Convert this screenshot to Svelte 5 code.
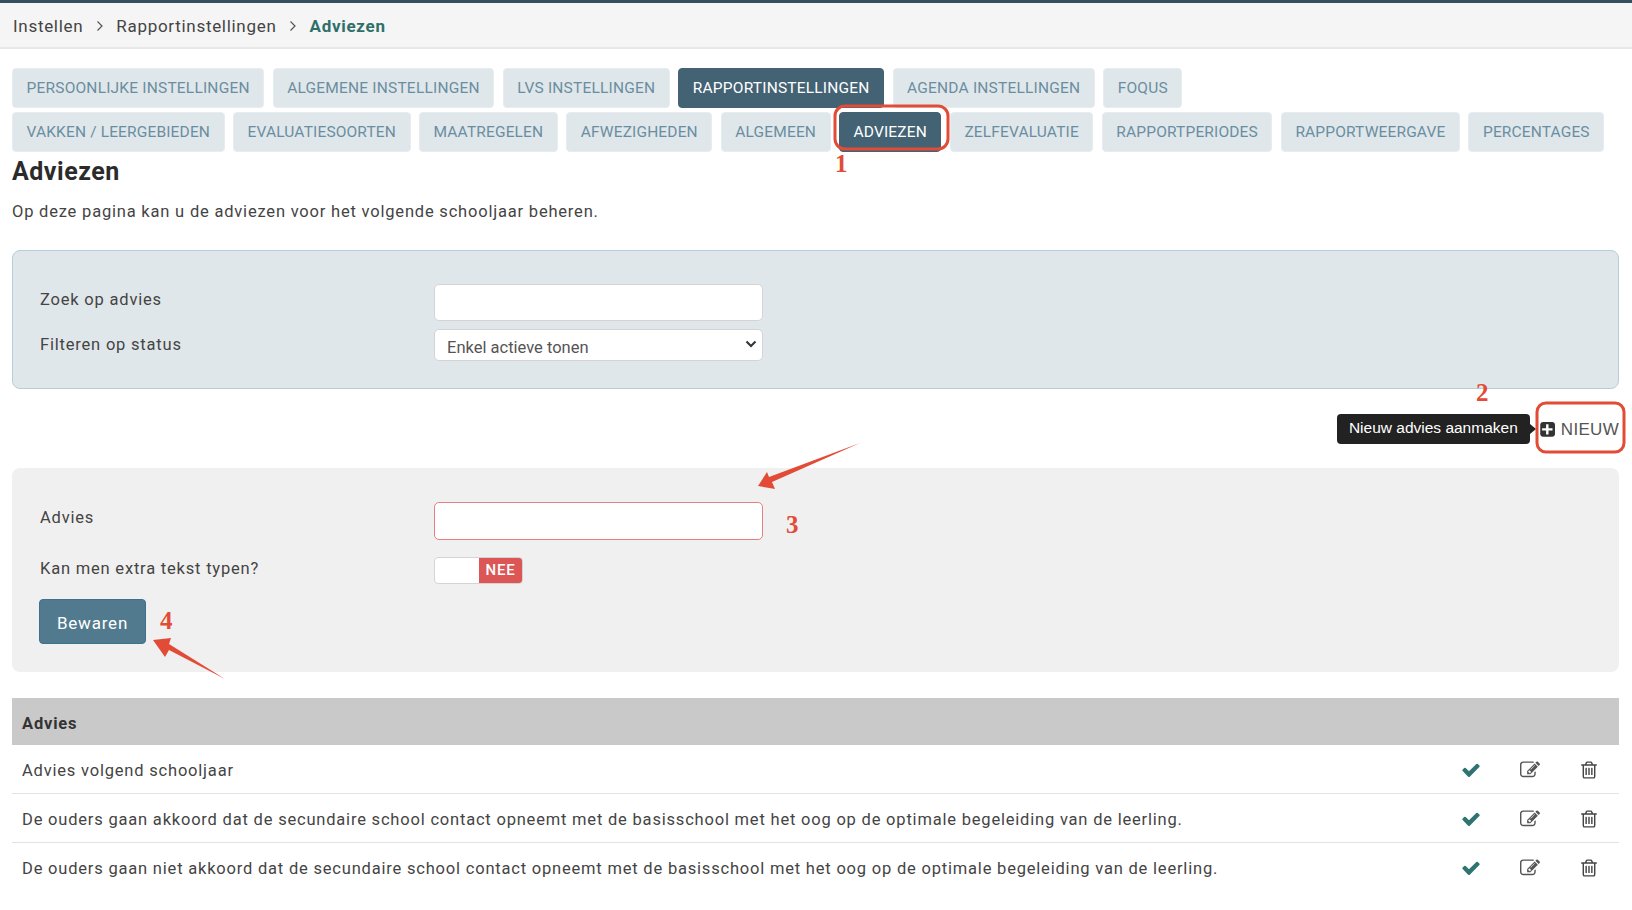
<script>
  const tabsTop = ["Persoonlijke instellingen", "Algemene instellingen", "LVS instellingen", "Rapportinstellingen", "Agenda instellingen", "Foqus"];
  const tabsSub = ["Vakken / leergebieden", "Evaluatiesoorten", "Maatregelen", "Afwezigheden", "Algemeen", "Adviezen", "Zelfevaluatie", "Rapportperiodes", "Rapportweergave", "Percentages"];
  const rows = [
    "Advies volgend schooljaar",
    "De ouders gaan akkoord dat de secundaire school contact opneemt met de basisschool met het oog op de optimale begeleiding van de leerling.",
    "De ouders gaan niet akkoord dat de secundaire school contact opneemt met de basisschool met het oog op de optimale begeleiding van de leerling."
  ];
</script>

<div class="page">
  <nav class="crumbs">
    <span>Instellen</span>
    <svg class="sep" viewBox="0 0 8 12"><path d="M1.5 1.5 6 6l-4.500 4.500" /></svg>
    <span>Rapportinstellingen</span>
    <svg class="sep" viewBox="0 0 8 12"><path d="M1.5 1.5 6 6l-4.500 4.500" /></svg>
    <strong>Adviezen</strong>
  </nav>

  <main>
    <div class="tabs">
      {#each tabsTop as tab}
        <button class="tab" class:active={tab === "Rapportinstellingen"}>{tab}</button>
      {/each}
    </div>
    <div class="tabs sub">
      {#each tabsSub as tab}
        <button class="tab" class:active={tab === "Adviezen"}>{tab}</button>
      {/each}
    </div>

    <h1>Adviezen</h1>
    <p class="intro">Op deze pagina kan u de adviezen voor het volgende schooljaar beheren.</p>

    <section class="filter">
      <label class="field">
        <span>Zoek op advies</span>
        <input type="text" />
      </label>
      <label class="field select-field">
        <span>Filteren op status</span>
        <div class="select-wrap">
          <select>
            <option>Enkel actieve tonen</option>
          </select>
          <svg viewBox="0 0 12 8"><path d="M1.500 1.500 6 6l4.500-4.500" /></svg>
        </div>
      </label>
    </section>

    <div class="actions">
      <div class="tooltip">Nieuw advies aanmaken</div>
      <button class="new">
        <svg viewBox="0 0 1664 1664"><path transform="translate(0 -128)" d="M1408 960v-128q0-26-19-45t-45-19h-352v-352q0-26-19-45t-45-19h-128q-26 0-45 19t-19 45v352h-352q-26 0-45 19t-19 45v128q0 26 19 45t45 19h352v352q0 26 19 45t45 19h128q26 0 45-19t19-45v-352h352q26 0 45-19t19-45zm256-544v960q0 119-84.500 203.500t-203.500 84.500h-960q-119 0-203.500-84.500t-84.500-203.500v-960q0-119 84.500-203.500t203.500-84.500h960q119 0 203.500 84.500t84.500 203.500z" /></svg>
        NIEUW
      </button>
    </div>

    <section class="form">
      <label class="field advies">
        <span>Advies</span>
        <input class="invalid" type="text" />
      </label>
      <div class="field toggle-row">
        <span>Kan men extra tekst typen?</span>
        <div class="toggle"><i></i><b>NEE</b></div>
      </div>
      <button class="save">Bewaren</button>
    </section>

    <table>
      <colgroup>
        <col />
        <col class="c1" />
        <col class="c2" />
        <col class="c3" />
      </colgroup>
      <thead>
        <tr><th colspan="4">Advies</th></tr>
      </thead>
      <tbody>
        {#each rows as row}
          <tr>
            <td>{row}</td>
            <td class="icon">
              <svg class="check" viewBox="0 0 1792 1792"><path d="M1671 566q0 40-28 68l-724 724-136 136q-28 28-68 28t-68-28l-136-136-362-362q-28-28-28-68t28-68l136-136q28-28 68-28t68 28l294 295 656-657q28-28 68-28t68 28l136 136q28 28 28 68z" /></svg>
            </td>
            <td class="icon">
              <svg class="edit" viewBox="0 0 1792 1792"><path d="M888 1184l116-116-152-152-116 116v56h96v96h56zm440-720q-16-16-33 1l-350 350q-17 17-1 33t33-1l350-350q17-17 1-33zm80 594v190q0 119-84.500 203.500t-203.500 84.500h-832q-119 0-203.500-84.500t-84.500-203.500v-832q0-119 84.500-203.500t203.500-84.500h832q63 0 117 25 15 7 18 23 3 17-9 29l-49 49q-14 14-32 8-23-6-45-6h-832q-66 0-113 47t-47 113v832q0 66 47 113t113 47h832q66 0 113-47t47-113v-126q0-13 9-22l64-64q15-15 35-7t20 29zm-96-738l288 288-672 672h-288v-288zm444 132l-92 92-288-288 92-92q28-28 68-28t68 28l152 152q28 28 28 68t-28 68z" /></svg>
            </td>
            <td class="icon">
              <svg class="trash" viewBox="0 0 1792 1792"><path d="M704 736v576q0 14-9 23t-23 9h-64q-14 0-23-9t-9-23v-576q0-14 9-23t23-9h64q14 0 23 9t9 23zm256 0v576q0 14-9 23t-23 9h-64q-14 0-23-9t-9-23v-576q0-14 9-23t23-9h64q14 0 23 9t9 23zm256 0v576q0 14-9 23t-23 9h-64q-14 0-23-9t-9-23v-576q0-14 9-23t23-9h64q14 0 23 9t9 23zm128 724v-948h-896v948q0 22 7 40.500t14.500 27 10.500 8.500h832q3 0 10.500-8.500t14.500-27 7-40.500zm-672-1076h448l-48-117q-7-9-17-11h-317q-10 2-17 11zm928 32v64q0 14-9 23t-23 9h-96v948q0 83-47 143.500t-113 60.500h-832q-66 0-113-58.500t-47-141.500v-952h-96q-14 0-23-9t-9-23v-64q0-14 9-23t23-9h309l70-167q15-37 54-63t79-26h320q40 0 79 26t54 63l70 167h309q14 0 23 9t9 23z" /></svg>
            </td>
          </tr>
        {/each}
      </tbody>
    </table>
  </main>

  <!-- annotations drawn on top of the screenshot -->
  <svg class="marks" viewBox="0 0 1632 910">
    <rect x="835" y="106" width="113" height="43" rx="10" />
    <rect x="1537" y="403" width="87" height="49" rx="9" />
    <polygon points="860,443 772,482 775,489 758,486 767,472 769,477" />
    <polygon points="225,679 169,650 165,657 153,640 171,638 169,644" />
    <text x="835" y="172">1</text>
    <text x="1476" y="401">2</text>
    <text x="786" y="533">3</text>
    <text x="160" y="629">4</text>
  </svg>
</div>

<style>
  :global(body) {
    margin: 0;
    background: #fff;
  }

  .page {
    position: relative;
    width: 1632px;
    height: 910px;
    overflow: hidden;
    font-family: Roboto, "Liberation Sans", sans-serif;
    font-size: 16.500px;
    letter-spacing: 0.8px;
    color: #444;
  }

  .crumbs {
    display: flex;
    align-items: center;
    gap: 12.500px;
    height: 43px;
    padding: 1px 13px 0;
    background: #f5f5f5;
    border-top: 3px solid #34505f;
    border-bottom: 2px solid #e8e8e8;
    font-size: 17px;
    letter-spacing: 0.7px;
  }

  .crumbs strong {
    color: #2f6f6a;
  }

  .sep {
    width: 8px;
    height: 12px;
    fill: none;
    stroke: #555;
    stroke-width: 1.2;
  }

  main {
    padding: 19px 13px 0 12px;
  }

  .tabs {
    display: flex;
    gap: 8.500px;
  }

  .sub {
    margin-top: 4px;
  }

  .tab {
    height: 40px;
    padding: 0 13.500px;
    border: 1px solid #e6ecef;
    border-radius: 4px;
    background: #e0e7ea;
    color: #6a8ea1;
    font: inherit;
    font-size: 15.500px;
    letter-spacing: 0.2px;
    text-transform: uppercase;
    white-space: nowrap;
  }

  .sub .tab {
    letter-spacing: 0.15px;
  }

  .tab.active {
    background: #436274;
    border-color: #436274;
    color: #fff;
  }

  h1 {
    margin: 4px 0 0;
    font-size: 25px;
    line-height: 32px;
    color: #2b2b2b;
    letter-spacing: 0.5px;
  }

  .intro {
    margin: 12px 0 0;
    line-height: 24px;
  }

  .filter {
    box-sizing: border-box;
    height: 139px;
    margin-top: 26px;
    padding: 33px 27px 0;
    background: #e0e7ea;
    border: 1px solid #b6cddb;
    border-radius: 8px;
  }

  .field {
    display: grid;
    grid-template-columns: 394px 329px;
  }

  .field span {
    padding-top: 1px;
    line-height: 30px;
  }

  input {
    box-sizing: border-box;
    width: 100%;
    height: 37px;
    padding: 0 12px;
    background: #fff;
    border: 1px solid #d4d4d4;
    border-radius: 5px;
    outline: none;
  }

  .select-field {
    margin-top: 8px;
  }

  .select-wrap {
    position: relative;
    height: 32px;
  }

  select {
    box-sizing: border-box;
    width: 100%;
    height: 32px;
    padding: 4px 12px 0;
    appearance: none;
    background: #fff;
    border: 1px solid #d4d4d4;
    border-radius: 5px;
    color: #555;
    font: inherit;
  }

  .select-wrap svg {
    position: absolute;
    top: 11px;
    right: 6px;
    width: 12px;
    height: 8px;
    fill: none;
    stroke: #333;
    stroke-width: 2;
  }

  .actions {
    display: flex;
    justify-content: flex-end;
    align-items: center;
    height: 79px;
  }

  .tooltip {
    position: relative;
    box-sizing: border-box;
    width: 193px;
    height: 30px;
    margin: 1px 9px 0 0;
    background: #222;
    border-radius: 4px;
    color: #fff;
    font-family: "Liberation Sans", Arial, sans-serif;
    font-size: 15.500px;
    letter-spacing: 0;
    line-height: 28px;
    text-align: center;
  }

  .tooltip::after {
    content: "";
    position: absolute;
    top: 10px;
    right: -6px;
    border-style: solid;
    border-width: 5px 0 5px 6px;
    border-color: transparent transparent transparent #222;
  }

  .new {
    display: flex;
    align-items: center;
    gap: 6px;
    padding: 0;
    margin-top: 3px;
    background: none;
    border: none;
    color: #555;
    font-family: "Liberation Sans", Arial, sans-serif;
    font-size: 17px;
    letter-spacing: 0.3px;
  }

  .new svg {
    width: 16px;
    height: 16px;
    fill: #333;
  }

  .form {
    box-sizing: border-box;
    height: 204px;
    padding: 34px 28px 0;
    background: #f0f0f0;
    border-radius: 8px;
  }

  .advies input {
    height: 38px;
  }

  .invalid {
    border-color: #e57f84;
  }

  .toggle-row {
    margin-top: 17px;
    height: 27px;
  }

  .toggle-row span {
    padding-top: 0;
    line-height: 24px;
  }

  .toggle {
    display: flex;
    box-sizing: border-box;
    width: 89px;
    height: 27px;
    overflow: hidden;
    background: #fff;
    border: 1px solid #d4d4d4;
    border-radius: 4px;
  }

  .toggle i {
    flex: 1;
  }

  .toggle b {
    width: 43px;
    background: #dc5656;
    color: #fff;
    font-size: 15px;
    font-weight: 500;
    line-height: 25px;
    text-align: center;
  }

  .save {
    display: block;
    width: 107px;
    height: 45px;
    margin: 15px 0 0 -1px;
    padding: 2px 0 0;
    background: #527a8f;
    border: 1px solid #41708a;
    border-radius: 4px;
    color: #fff;
    font: inherit;
    font-size: 17px;
    letter-spacing: 0.8px;
  }

  table {
    width: 100%;
    margin-top: 26px;
    border-collapse: collapse;
    table-layout: fixed;
  }

  .c1 {
    width: 58px;
  }

  .c2 {
    width: 60px;
  }

  .c3 {
    width: 59px;
  }

  th {
    box-sizing: border-box;
    height: 47px;
    padding: 4px 10px 0;
    background: #c9c9c9;
    color: #333;
    font-weight: 700;
    text-align: left;
  }

  td {
    box-sizing: border-box;
    height: 48.500px;
    padding: 3px 10px 0;
    border-bottom: 1px solid #e3e3e3;
    white-space: nowrap;
  }

  tbody tr:last-child td {
    border-bottom: none;
  }

  .icon {
    padding: 2px 0 0;
    text-align: center;
  }

  .icon svg {
    display: inline-block;
    vertical-align: middle;
    width: 20px;
    height: 20px;
  }

  .check {
    fill: #2f7470;
  }

  .edit {
    fill: #555;
  }

  .trash {
    fill: #444;
  }

  .marks {
    position: absolute;
    inset: 0;
    width: 1632px;
    height: 910px;
    pointer-events: none;
  }

  .marks rect {
    fill: none;
    stroke: #e24c36;
    stroke-width: 3;
  }

  .marks polygon {
    fill: #e24c36;
  }

  .marks text {
    fill: #e24c36;
    font-family: "Liberation Serif", serif;
    font-size: 25px;
    font-weight: 700;
    letter-spacing: 0;
  }
</style>
